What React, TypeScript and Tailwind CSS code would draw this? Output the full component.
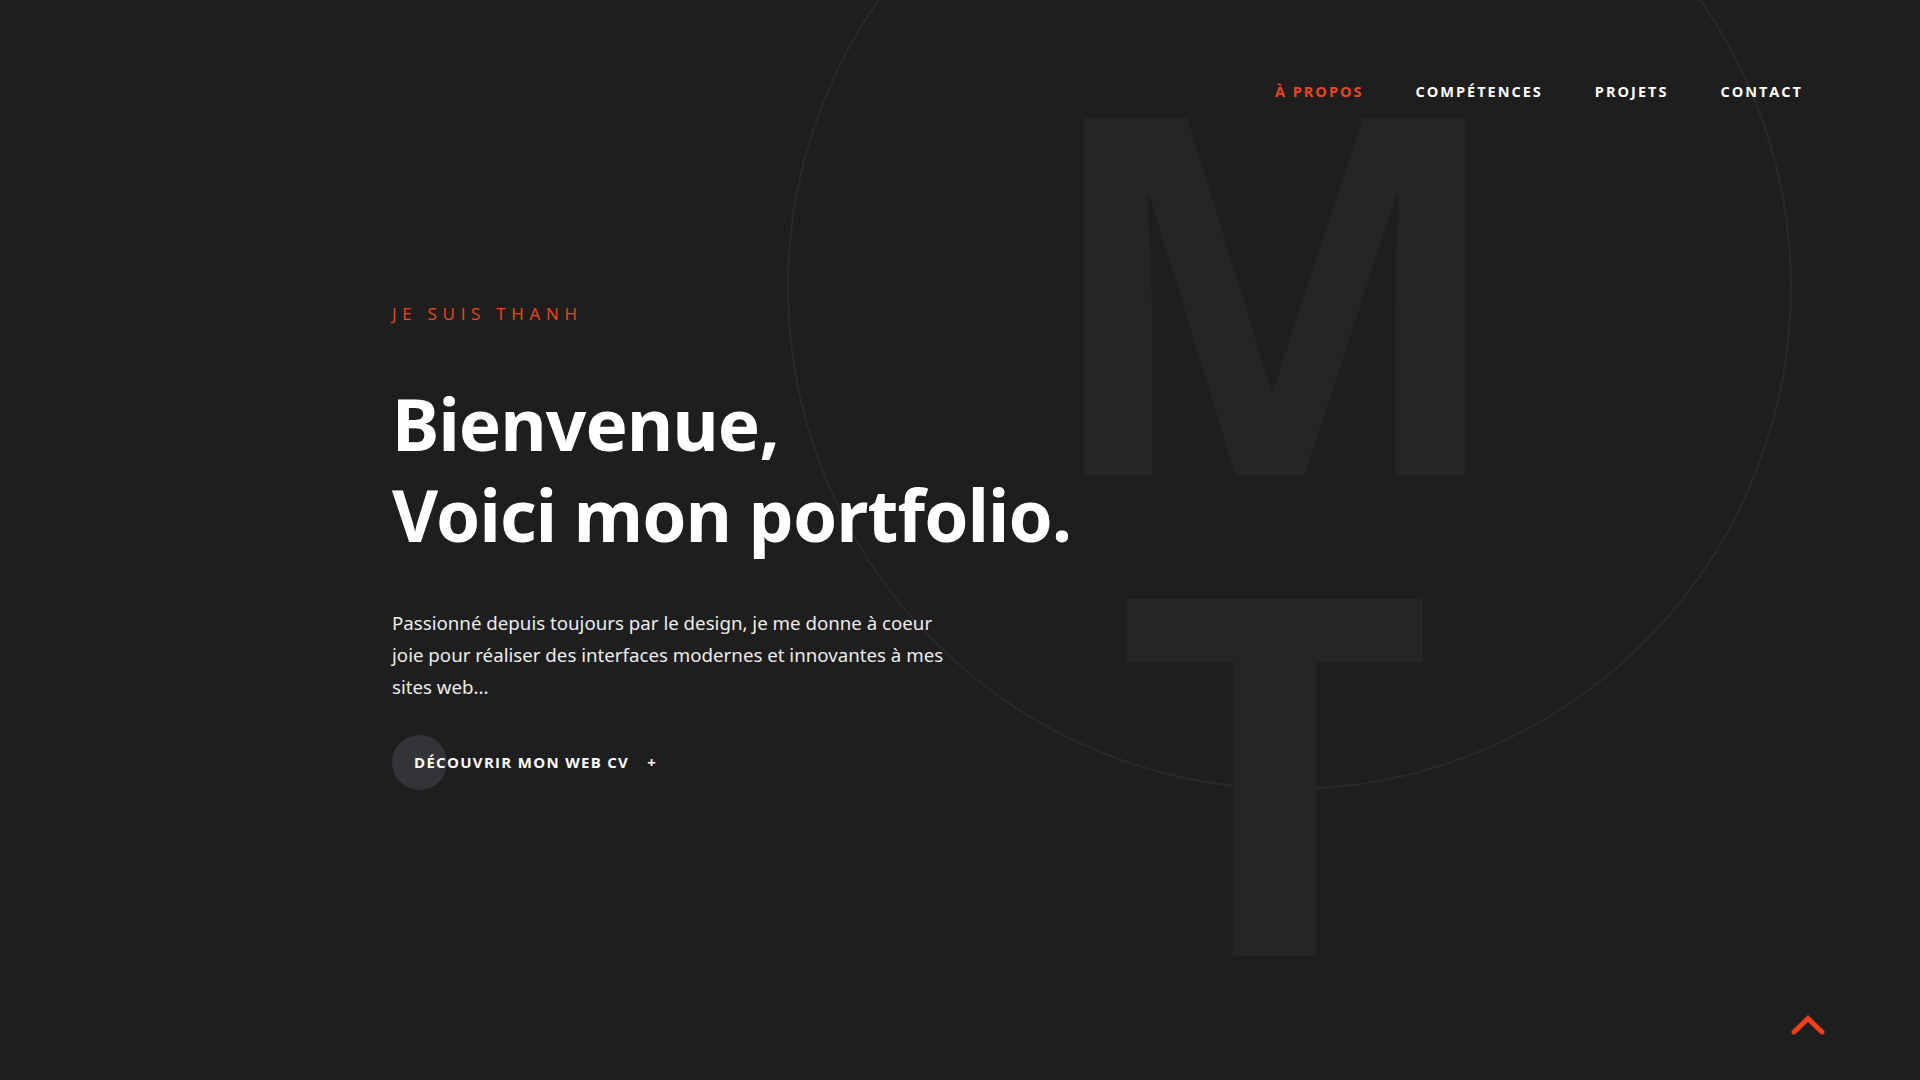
export default function App() {
  return (
    <div className="relative h-[1080px] w-full overflow-hidden bg-[#1f1e1e]">
      {/* decorative circle */}
      <div className="pointer-events-none absolute left-[787px] top-[-215px] h-[1005px] w-[1005px] rounded-full border-2 border-[#29292c]" />
      {/* decorative initials */}
      <div className="pointer-events-none absolute left-[975px] top-[41px] flex w-[600px] select-none flex-col items-center font-['Open_Sans',sans-serif] text-[500px] font-bold leading-[481px] text-[#252528]">
        <span>M</span>
        <span className="inline-block scale-x-[1.1]">T</span>
      </div>

      <header className="relative flex justify-end gap-[52px] pr-[117px] pt-[82px] font-['Open_Sans',sans-serif] text-[14.5px] font-bold leading-[20px] tracking-[2px]">
        <a className="text-[#ef4423]">À PROPOS</a>
        <a className="text-white">COMPÉTENCES</a>
        <a className="text-white">PROJETS</a>
        <a className="text-white">CONTACT</a>
      </header>

      <main className="relative pl-[392px] pt-[200px]">
        <p className="font-['Open_Sans',sans-serif] text-[17px] font-medium leading-[24px] tracking-[5.7px] text-[#ef4423]">
          JE SUIS THANH
        </p>
        <h1 className="mt-[52px] font-['Noto_Sans',sans-serif] text-[71px] font-bold leading-[91px] tracking-[-0.8px] text-white">
          Bienvenue,
          <br />
          Voici mon portfolio.
        </h1>
        <p className="mt-[47px] max-w-[570px] font-['Noto_Sans',sans-serif] text-[18.7px] leading-[32px] text-[#ececec]">
          Passionné depuis toujours par le design, je me donne à coeur joie pour réaliser des interfaces modernes et innovantes à mes sites web...
        </p>
        <div className="relative mt-[32px] flex h-[55px] w-fit items-center">
          <span className="absolute left-0 top-0 h-[55px] w-[55px] rounded-full bg-[#333338]" />
          <span className="relative pl-[22px] font-['Open_Sans',sans-serif] text-[15px] font-bold tracking-[1.3px] text-white">
            DÉCOUVRIR MON WEB CV
          </span>
          <span className="relative ml-[18px] font-['Open_Sans',sans-serif] text-[15px] font-bold text-white">+</span>
        </div>
      </main>

      <button className="absolute left-[1791px] top-[1013px] flex h-[23px] w-[34px] items-center justify-center">
        <svg width="34" height="23" viewBox="0 0 34 23" fill="none">
          <polyline points="3,19 17,5.5 31,19" stroke="#f2401f" strokeWidth="5" strokeLinecap="round" strokeLinejoin="miter" />
        </svg>
      </button>
    </div>
  );
}
